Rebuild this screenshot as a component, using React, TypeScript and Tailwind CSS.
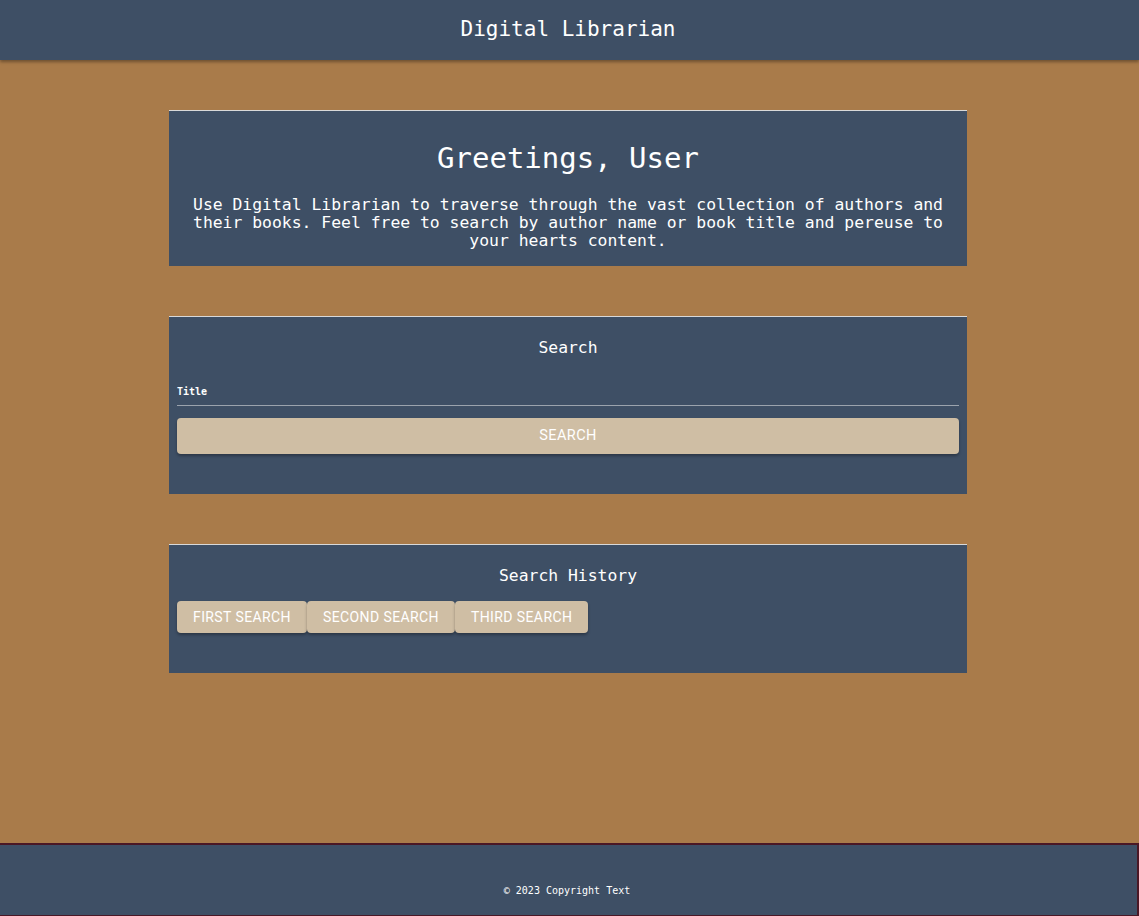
import React from "react";

const mono = { fontFamily: '"DejaVu Sans Mono", "Liberation Mono", monospace' };
const sans = { fontFamily: 'Roboto, "Noto Sans", Arial, sans-serif' };

function Panel({ children, className = "" }: { children: React.ReactNode; className?: string }) {
  return (
    <section className={`w-[798px] bg-[#3e4f65] border-t border-[#d9d9d9] text-white ${className}`}>
      {children}
    </section>
  );
}

const history = ["First Search", "Second Search", "Third Search"];

export default function App() {
  return (
    <div className="min-h-[916px] flex flex-col bg-[#a97b4a]" style={mono}>
      <header className="h-[60px] pr-[3px] bg-[#3e4f65] flex items-center justify-center shadow-[0_2px_3px_rgba(0,0,0,0.35)] relative z-10">
        <h1 className="text-[21px] text-white leading-none -mt-[2px]">Digital Librarian</h1>
      </header>

      <main className="flex-1 flex flex-col items-center pt-[50px] pr-[3px] gap-[50px]">
        {/* Greeting */}
        <Panel className="px-6 pt-[30px] pb-[16px] text-center">
          <h2 className="text-[29px] leading-[35px]">Greetings, User</h2>
          <p className="mt-[20px] text-[16.4px] leading-[18px]">
            Use Digital Librarian to traverse through the vast collection of authors and their books. Feel free to
            search by author name or book title and pereuse to your hearts content.
          </p>
        </Panel>

        {/* Search */}
        <Panel className="px-2 pt-[21px] pb-[40px]">
          <h3 className="text-center text-[16.4px] leading-[20px]">Search</h3>
          <div className="mt-[29px] border-b border-[#9ba3ad] pb-[8px]">
            <label className="block text-[10px] font-bold leading-[10px]">Title</label>
          </div>
          <button
            className="mt-[12px] w-full h-[36px] rounded bg-[#cfbea4] text-white text-[14.5px] font-normal uppercase tracking-[0.4px] shadow-[0_2px_3px_rgba(0,0,0,0.3)]"
            style={sans}
          >
            Search
          </button>
        </Panel>

        {/* Search History */}
        <Panel className="px-2 pt-[21px] pb-[40px]">
          <h3 className="text-center text-[16.4px] leading-[20px]">Search History</h3>
          <div className="mt-[15px] flex">
            {history.map((h) => (
              <button
                key={h}
                className="h-[32px] px-4 rounded bg-[#cfbea4] text-white text-[14px] font-normal uppercase tracking-[0.4px] shadow-[0_2px_3px_rgba(0,0,0,0.3)]"
                style={sans}
              >
                {h}
              </button>
            ))}
          </div>
        </Panel>
      </main>

      <footer className="h-[73px] bg-[#3e4f65] border-t-2 border-r-2 border-b border-[#4a1725] flex items-end justify-center pb-[19px] pr-[3px]">
        <span className="text-[10px] text-white leading-none">© 2023 Copyright Text</span>
      </footer>
    </div>
  );
}
